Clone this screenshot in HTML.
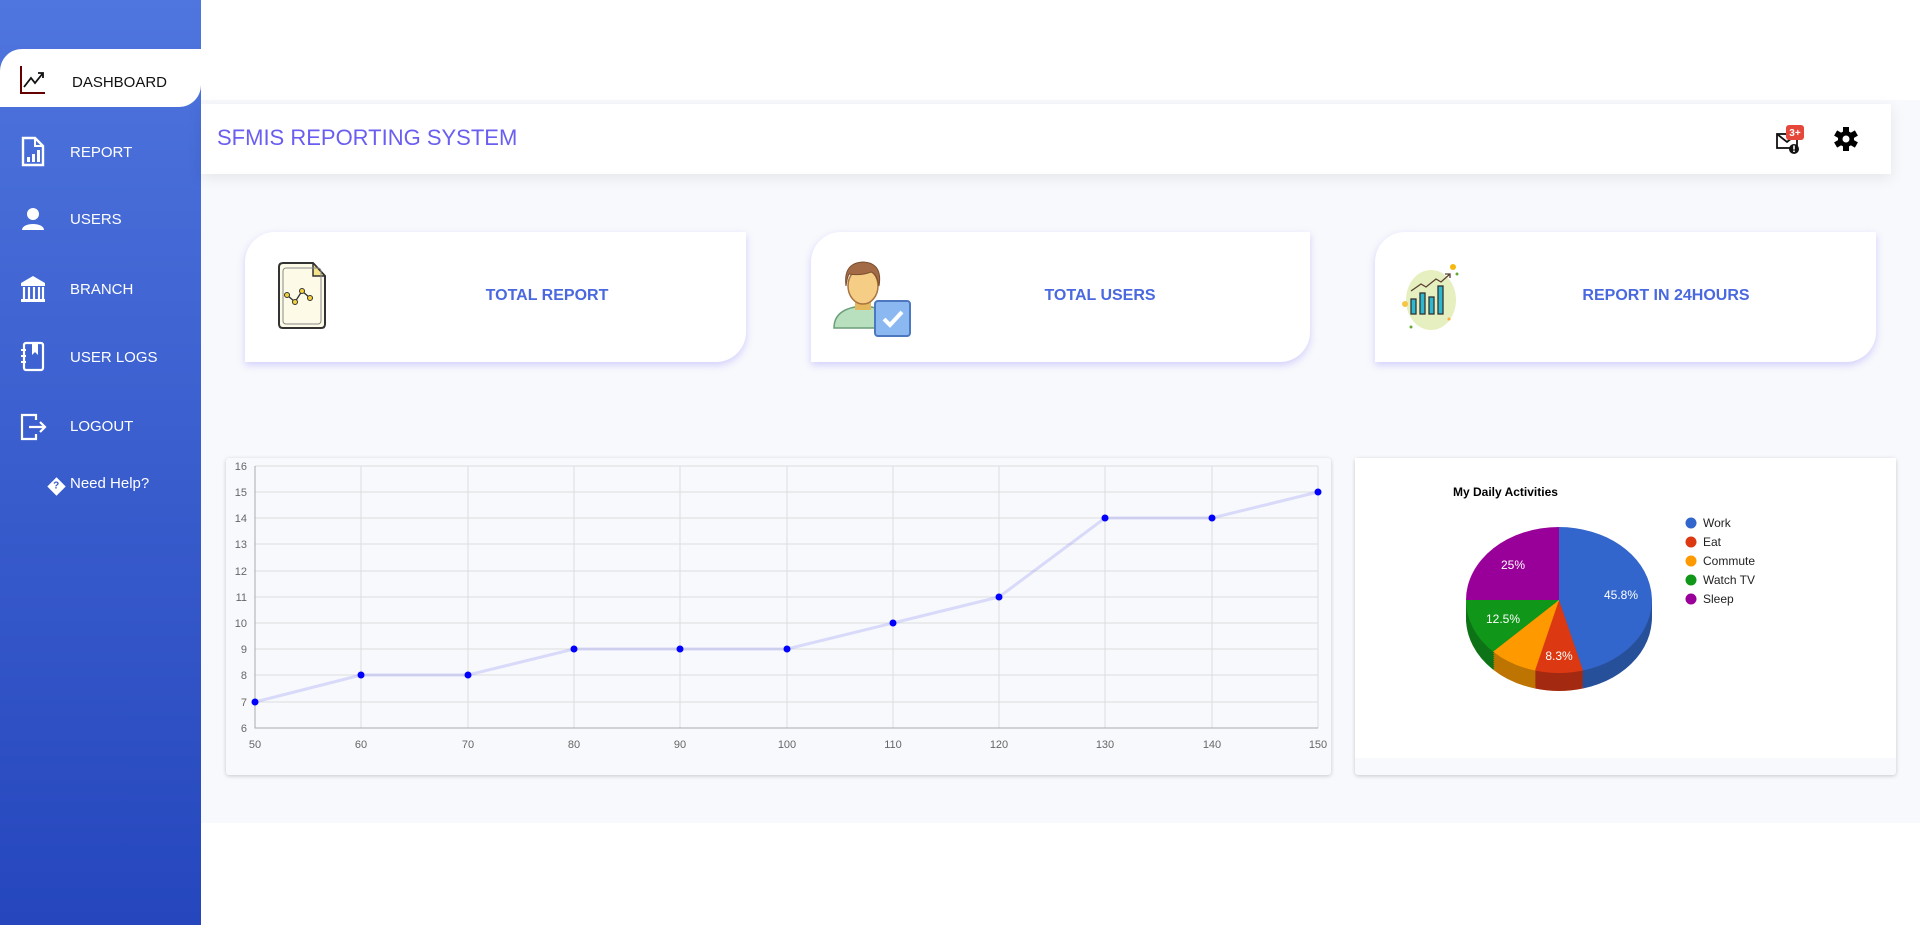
<!DOCTYPE html>
<html><head><meta charset="utf-8"><style>
*{margin:0;padding:0;box-sizing:border-box}
body{width:1920px;height:925px;position:relative;background:#fff;font-family:"Liberation Sans",sans-serif;overflow:hidden}
.side{position:absolute;left:0;top:0;width:201px;height:925px;background:linear-gradient(#4f75de,#2546bd)}
.nav{position:absolute;left:0;width:201px;height:40px;color:#fff;font-size:15px}
.nav span{position:absolute;left:70px;top:11px}
.nav svg{position:absolute;left:20px}
.act{position:absolute;left:0;top:49px;width:201px;height:58px;background:#fff;border-radius:22px 0 22px 0}
.main{position:absolute;left:201px;top:100px;width:1719px;height:723px;background:#f8f9fc}
.hdr{position:absolute;left:201px;top:104px;width:1690px;height:70px;background:#fff;box-shadow:0 4px 14px rgba(0,0,0,.08)}
.card{position:absolute;top:232px;height:130px;background:#fff;border-radius:30px 0 30px 0;box-shadow:0 3px 8px rgba(120,110,255,.3)}
.card b{position:absolute;top:55px;font-size:16px;color:#4a68df;white-space:nowrap;transform:translateX(-50%)}
.box{position:absolute;top:458px;height:317px;border-radius:3px;box-shadow:0 1px 4px rgba(0,0,0,.2)}
</style></head><body>
<div class="side"></div>
<div class="main"></div>
<div class="act"></div>
<div class="nav" style="top:62px;color:#111"><svg style="top:3px" width="26" height="30" viewBox="0 0 26 30"><path d="M1 1V28H25" stroke="#600" stroke-width="2" fill="none"/><path d="M4 22L11 13L15 18L23 8M18 8H23V13" stroke="#111" stroke-width="1.8" fill="none"/></svg><span style="left:72px;top:12px">DASHBOARD</span></div>
<div class="nav" style="top:133px"><svg style="top:3px" width="26" height="32" viewBox="0 0 26 32"><path d="M3 2H15L23 10V29H3Z" stroke="#fff" stroke-width="2.4" fill="none"/><path d="M15 2V10H23" stroke="#fff" stroke-width="2" fill="none"/><rect x="7" y="21" width="3" height="5" fill="#fff"/><rect x="12" y="18" width="3" height="8" fill="#fff"/><rect x="17" y="14" width="3" height="12" fill="#fff"/></svg><span>REPORT</span></div>
<div class="nav" style="top:200px"><svg style="top:7px" width="26" height="24" viewBox="0 0 26 24"><circle cx="13" cy="7" r="6" fill="#fff"/><path d="M2 23C2 15 24 15 24 23Z" fill="#fff"/></svg><span>USERS</span></div>
<div class="nav" style="top:270px"><svg style="top:4px" width="26" height="30" viewBox="0 0 26 30"><path d="M1 9L13 2L25 9Z" fill="#fff"/><rect x="1" y="9" width="24" height="3" fill="#fff"/><path d="M4 13V25M9 13V25M14 13V25M19 13V25M23 13V25" stroke="#fff" stroke-width="2.2"/><rect x="1" y="25" width="24" height="3" fill="#fff"/></svg><span>BRANCH</span></div>
<div class="nav" style="top:338px"><svg style="top:3px" width="26" height="32" viewBox="0 0 26 32"><rect x="4" y="2" width="19" height="27" rx="2" stroke="#fff" stroke-width="2.2" fill="none"/><path d="M12 2V14L15 11L18 14V2Z" fill="#fff"/><path d="M1 9H6M1 15H6M1 21H6" stroke="#fff" stroke-width="2"/></svg><span>USER LOGS</span></div>
<div class="nav" style="top:407px"><svg style="top:5px" width="28" height="30" viewBox="0 0 28 30"><path d="M16 8V3H2V27H16V22" stroke="#fff" stroke-width="2.2" fill="none"/><path d="M9 15H25M20 10L25 15L20 20" stroke="#fff" stroke-width="2.2" fill="none"/></svg><span>LOGOUT</span></div>
<div style="position:absolute;left:50px;top:475px;color:#fff;font-size:15px"><span style="display:inline-block;width:13px;height:13px;background:#fff;transform:rotate(45deg);vertical-align:-1px;margin-right:7px;color:#3558cc;font-size:10px;font-weight:bold;text-align:center;line-height:13px"><i style="display:inline-block;transform:rotate(-45deg);font-style:normal">?</i></span>Need Help?</div>

<div class="hdr"><div style="position:absolute;left:16px;top:21px;font-size:22px;color:#6a5ef0">SFMIS REPORTING SYSTEM</div>
<svg style="position:absolute;left:1574px;top:20px" width="34" height="32" viewBox="0 0 34 32"><rect x="2" y="10" width="20" height="14" stroke="#111" stroke-width="1.8" fill="none"/><path d="M2 10L12 18L22 10" stroke="#111" stroke-width="1.8" fill="none"/><circle cx="19" cy="25" r="5" fill="#111"/><rect x="18.2" y="21.5" width="1.6" height="4" fill="#fff"/><rect x="18.2" y="26.5" width="1.6" height="1.5" fill="#fff"/><rect x="11" y="1" width="18" height="15" rx="3" fill="#e5473b"/><text x="20" y="12" font-size="10" font-weight="bold" fill="#fff" text-anchor="middle" font-family="Liberation Sans">3+</text></svg>
<svg style="position:absolute;left:1633px;top:22px" width="24" height="26" viewBox="-12 -12 24 24"><g fill="#000"><circle r="8"/><rect x="-3" y="-12" width="6" height="24"/><rect x="-3" y="-12" width="6" height="24" transform="rotate(60)"/><rect x="-3" y="-12" width="6" height="24" transform="rotate(120)"/></g><circle r="3.5" fill="#fff"/></svg>
</div>

<div class="card" style="left:245px;width:501px"><svg style="position:absolute;left:33px;top:30px" width="48" height="68" viewBox="0 0 48 68"><path d="M5 1H35L47 14V62Q47 66 43 66H5Q1 66 1 62V5Q1 1 5 1Z" fill="#fdfbe7" stroke="#333" stroke-width="2"/><path d="M35 1V14H47Z" fill="#f5e38b" stroke="#333" stroke-width="1.5"/><rect x="5" y="6" width="38" height="56" rx="3" fill="none" stroke="#888" stroke-width="1"/><path d="M9 33L17 40L24 29L32 36" stroke="#333" fill="none" stroke-width="1.3"/><g fill="#f3d03b" stroke="#333" stroke-width="1"><circle cx="9" cy="33" r="2.5"/><circle cx="17" cy="40" r="2.5"/><circle cx="24" cy="29" r="2.5"/><circle cx="32" cy="36" r="2.5"/></g></svg><b style="left:302px">TOTAL REPORT</b></div>
<div class="card" style="left:811px;width:499px"><svg style="position:absolute;left:22px;top:26px" width="80" height="80" viewBox="0 0 80 80"><path d="M1 70Q1 50 30 48Q60 50 60 70Z" fill="#b9e0be" stroke="#6a9e78" stroke-width="1.5"/><rect x="22" y="40" width="16" height="12" fill="#e5b85e"/><ellipse cx="30" cy="28" rx="15" ry="18" fill="#f5cd84" stroke="#a8743f" stroke-width="1.5"/><path d="M13 28Q10 5 30 4Q50 5 46 28Q44 16 38 14Q28 18 16 16Q14 20 13 28Z" fill="#a26b46" stroke="#7b4f2e" stroke-width="1"/><rect x="42" y="43" width="35" height="35" rx="3" fill="#8cb8f2" stroke="#4c78c0" stroke-width="2"/><path d="M51 61L57 67L69 54" stroke="#fff" stroke-width="4" fill="none"/></svg><b style="left:289px">TOTAL USERS</b></div>
<div class="card" style="left:1375px;width:501px"><svg style="position:absolute;left:26px;top:32px" width="70" height="68" viewBox="0 0 70 68"><ellipse cx="30" cy="36" rx="25" ry="30" fill="#e6efbf"/><circle cx="52" cy="3" r="3" fill="#f5b90e"/><circle cx="4" cy="40" r="3" fill="#f5c546"/><circle cx="56" cy="10" r="1.5" fill="#6a3"/><circle cx="10" cy="63" r="1.5" fill="#6a3"/><circle cx="48" cy="55" r="1.5" fill="#fa3"/><path d="M10 27L20 20L25 23L35 15L40 18L49 10M44 10H49V14" stroke="#5a4030" stroke-width="1.3" fill="none"/><g fill="#2bb8d0" stroke="#333" stroke-width="1.3"><rect x="10" y="35" width="5" height="15"/><rect x="19" y="29" width="5" height="21"/><rect x="28" y="33" width="5" height="17"/><rect x="37" y="22" width="5" height="28"/></g></svg><b style="left:291px">REPORT IN 24HOURS</b></div>

<div class="box" style="left:226px;width:1105px;background:#f8f9fc">
<svg width="1105" height="317" viewBox="226 458 1105 317" style="position:absolute;left:0;top:0" font-family="Liberation Sans" font-size="11" fill="#666">
<g stroke="#ddd" stroke-width="1">
<path d="M255 466H1318M255 492H1318M255 518H1318M255 544H1318M255 571H1318M255 597H1318M255 623H1318M255 649H1318M255 675H1318M255 702H1318"/>
<path d="M361 466V728M468 466V728M574 466V728M680 466V728M787 466V728M893 466V728M999 466V728M1105 466V728M1212 466V728M1318 466V728"/>
</g>
<path d="M255 466V728H1318" stroke="#aaa" fill="none"/>
<g text-anchor="end"><text x="247" y="470">16</text><text x="247" y="496">15</text><text x="247" y="522">14</text><text x="247" y="548">13</text><text x="247" y="575">12</text><text x="247" y="601">11</text><text x="247" y="627">10</text><text x="247" y="653">9</text><text x="247" y="679">8</text><text x="247" y="706">7</text><text x="247" y="732">6</text></g>
<g text-anchor="middle"><text x="255" y="748">50</text><text x="361" y="748">60</text><text x="468" y="748">70</text><text x="574" y="748">80</text><text x="680" y="748">90</text><text x="787" y="748">100</text><text x="893" y="748">110</text><text x="999" y="748">120</text><text x="1105" y="748">130</text><text x="1212" y="748">140</text><text x="1318" y="748">150</text></g>
<polyline points="255,702 361,675 468,675 574,649 680,649 787,649 893,623 999,597 1105,518 1212,518 1318,492" stroke="rgba(110,110,245,.22)" stroke-width="3" fill="none"/>
<g fill="#00f"><circle cx="255" cy="702" r="3.5"/><circle cx="361" cy="675" r="3.5"/><circle cx="468" cy="675" r="3.5"/><circle cx="574" cy="649" r="3.5"/><circle cx="680" cy="649" r="3.5"/><circle cx="787" cy="649" r="3.5"/><circle cx="893" cy="623" r="3.5"/><circle cx="999" cy="597" r="3.5"/><circle cx="1105" cy="518" r="3.5"/><circle cx="1212" cy="518" r="3.5"/><circle cx="1318" cy="492" r="3.5"/></g>
</svg></div>

<div class="box" style="left:1355px;width:541px;background:#f8f9fc">
<div style="position:absolute;left:0;top:0;width:541px;height:300px;background:#fff"></div>
<svg width="541" height="317" viewBox="1355 458 541 317" style="position:absolute;left:0;top:0" font-family="Liberation Sans" font-size="12">
<defs><g id="dk">
<path d="M1559 600L1559 527A93 73 0 0 1 1583 670.5Z" fill="#27509a"/>
<path d="M1559 600L1583 670.5A93 73 0 0 1 1535 670.5Z" fill="#a32a10"/>
<path d="M1559 600L1535 670.5A93 73 0 0 1 1493 651.6Z" fill="#bd7400"/>
<path d="M1559 600L1493 651.6A93 73 0 0 1 1466 600Z" fill="#0e7317"/>
</g></defs>
<use href="#dk" y="18"/><use href="#dk" y="16"/><use href="#dk" y="14"/><use href="#dk" y="12"/><use href="#dk" y="10"/><use href="#dk" y="8"/><use href="#dk" y="6"/><use href="#dk" y="4"/><use href="#dk" y="2"/>
<path d="M1559 600L1559 527A93 73 0 0 1 1583 670.5Z" fill="#3366cc"/>
<path d="M1559 600L1583 670.5A93 73 0 0 1 1535 670.5Z" fill="#dc3912"/>
<path d="M1559 600L1535 670.5A93 73 0 0 1 1493 651.6Z" fill="#ff9900"/>
<path d="M1559 600L1493 651.6A93 73 0 0 1 1466 600Z" fill="#109618"/>
<path d="M1559 600L1466 600A93 73 0 0 1 1559 527Z" fill="#990099"/>
<g fill="#fff" text-anchor="middle"><text x="1621" y="599">45.8%</text><text x="1559" y="660">8.3%</text><text x="1503" y="623">12.5%</text><text x="1513" y="569">25%</text></g>
<text x="1453" y="496" font-weight="bold" fill="#000">My Daily Activities</text>
<g fill="#222"><circle cx="1691" cy="523" r="5.5" fill="#3366cc"/><text x="1703" y="527">Work</text>
<circle cx="1691" cy="542" r="5.5" fill="#dc3912"/><text x="1703" y="546">Eat</text>
<circle cx="1691" cy="561" r="5.5" fill="#ff9900"/><text x="1703" y="565">Commute</text>
<circle cx="1691" cy="580" r="5.5" fill="#109618"/><text x="1703" y="584">Watch TV</text>
<circle cx="1691" cy="599" r="5.5" fill="#990099"/><text x="1703" y="603">Sleep</text></g>
</svg></div>
</body></html>
